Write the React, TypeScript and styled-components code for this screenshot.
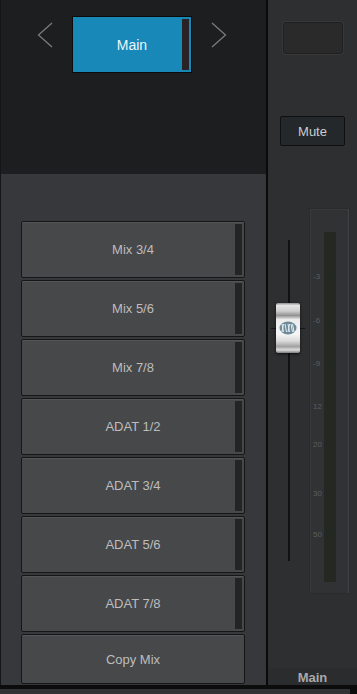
import React from "react";
import styled, { createGlobalStyle } from "styled-components";

const GlobalStyle = createGlobalStyle`
  html, body {
    margin: 0;
    padding: 0;
    background: #0c0c0c;
  }
  * {
    box-sizing: border-box;
  }
`;

const Screen = styled.div`
  width: 357px;
  height: 694px;
  display: flex;
  flex-direction: column;
  background: #0c0c0c;
  font-family: "Liberation Sans", Arial, sans-serif;
  overflow: hidden;
`;

const Body = styled.div`
  display: flex;
  height: 685px;
`;

const LeftColumn = styled.div`
  width: 268px;
  display: flex;
  flex-direction: column;
  border-left: 1px solid #141516;
  border-right: 2px solid #0a0a0a;
`;

const TopArea = styled.div`
  height: 174px;
  background: #1d1e20;
  display: flex;
  align-items: flex-start;
  gap: 19px;
  padding: 16px 0 0 36px;
`;

const Chevron = styled.svg`
  width: 16px;
  height: 26px;
  margin-top: 6px;
  flex-shrink: 0;
`;

const MainButton = styled.div`
  position: relative;
  flex-shrink: 0;
  width: 120px;
  height: 57px;
  border: 1px solid #0b0b0b;
  background: #1888b9;
  color: #eef6fa;
  font-size: 14px;
  display: flex;
  align-items: center;
  justify-content: center;
`;

const Indicator = styled.span<{ $tone: string }>`
  position: absolute;
  right: 2px;
  top: 2px;
  bottom: 2px;
  width: 7px;
  background: ${({ $tone }) => $tone};
`;

const LowerArea = styled.div`
  flex: 1;
  background: #37383b;
  padding: 47px 21px 0 20px;
  display: flex;
  flex-direction: column;
  gap: 2px;
  overflow: hidden;
`;

const MixButton = styled.div<{ $short?: boolean }>`
  position: relative;
  flex-shrink: 0;
  height: ${({ $short }) => ($short ? 50 : 57)}px;
  border: 1px solid #161616;
  border-radius: 2px;
  background: #47484a;
  box-shadow: inset 0 1px 0 #545557;
  color: #bdbdbd;
  font-size: 13px;
  display: flex;
  align-items: center;
  justify-content: center;
`;

const RightPanel = styled.div`
  flex: 1;
  background: #2e2f31;
  display: flex;
  flex-direction: column;
  align-items: center;
`;

const DisplayBox = styled.div`
  margin-top: 22px;
  width: 60px;
  height: 32px;
  border-radius: 3px;
  background: #2a2a2b;
  border: 1px solid #202021;
  box-shadow: 0 0 1px 1px #38393b;
`;

const MuteButton = styled.div`
  margin-top: 62px;
  width: 65px;
  height: 30px;
  border: 1px solid #0f0f0f;
  border-radius: 2px;
  background: #24282a;
  color: #cdcdcd;
  font-size: 13px;
  display: flex;
  align-items: center;
  justify-content: center;
`;

const StripArea = styled.div`
  margin-top: 62px;
  width: 100%;
  height: 386px;
  display: flex;
`;

const FaderColumn = styled.div`
  position: relative;
  width: 41px;
  display: flex;
  justify-content: center;
  padding-top: 32px;
`;

const FaderTrack = styled.div`
  width: 2px;
  height: 321px;
  background: #121213;
`;

const FaderTick = styled.div`
  position: absolute;
  top: 120px;
  left: 3px;
  width: 34px;
  height: 1px;
  background: #161616;
`;

const FaderCap = styled.div`
  position: absolute;
  top: 95px;
  left: 8px;
  width: 24px;
  height: 50px;
  border-radius: 2px;
  background: linear-gradient(
    to bottom,
    #8e8e8e 0%,
    #e4e4e4 5%,
    #cfcfcf 16%,
    #929292 25%,
    #ececec 33%,
    #f6f6f6 62%,
    #dadada 76%,
    #a2a2a2 87%,
    #dcdcdc 94%,
    #7e7e7e 100%
  );
  box-shadow: 0 1px 3px rgba(0, 0, 0, 0.7);
  display: flex;
  align-items: center;
  justify-content: center;
`;

const MeterPanel = styled.div`
  position: relative;
  width: 41px;
  height: 386px;
  background: #313234;
  border: 1px solid #2a2b2d;
  box-shadow: inset -1px 0 0 #424346, inset 1px 1px 0 #38393b;
  padding: 23px 0 0 14px;
`;

const MeterBar = styled.div`
  width: 12px;
  height: 350px;
  background: #232823;
`;

const ScaleLabel = styled.span`
  position: absolute;
  left: 3px;
  font-size: 8px;
  line-height: 8px;
  color: #5c5d5f;
`;

const ChannelName = styled.div`
  margin-top: auto;
  width: 100%;
  height: 17px;
  background: #2b2c2e;
  color: #a9a9a9;
  font-size: 13px;
  font-weight: bold;
  line-height: 19px;
  text-align: center;
  overflow: hidden;
`;

const Footer = styled.div`
  height: 9px;
  padding: 4px 7px 0 0;
  background: #0c0c0c;
`;

const FooterStrip = styled.div`
  height: 5px;
  background: #323335;
`;

const mixes = [
  "Mix 3/4",
  "Mix 5/6",
  "Mix 7/8",
  "ADAT 1/2",
  "ADAT 3/4",
  "ADAT 5/6",
  "ADAT 7/8",
];

// y of each scale label, measured from the top of the meter panel
const scale: [string, number][] = [
  ["-3", 69],
  ["-6", 113],
  ["-9", 156],
  ["12", 199],
  ["20", 237],
  ["30", 286],
  ["50", 327],
];

const FaderLogo = () => (
  <svg width="18" height="14" viewBox="0 0 18 14">
    <ellipse cx="9" cy="7" rx="8.5" ry="6.5" fill="#6d8b98" />
    <path
      d="M3 3 L4.5 11 M6 3 L7.5 11 M9 3 L10.5 11 M12 3 L13.5 11 M4.5 3 L3 11 M10.5 3 L9 11 M13.5 3 L15 11"
      stroke="#e6eef1"
      strokeWidth="1"
      fill="none"
    />
  </svg>
);

export default function App() {
  return (
    <>
      <GlobalStyle />
      <Screen>
        <Body>
          <LeftColumn>
            <TopArea>
              <Chevron viewBox="0 0 16 26">
                <path d="M15 1 L1.5 13 L15 25" stroke="#7b7b7b" strokeWidth="1.3" fill="none" />
              </Chevron>
              <MainButton>
                Main
                <Indicator $tone="#2a2325" />
              </MainButton>
              <Chevron viewBox="0 0 16 26">
                <path d="M1 1 L14.5 13 L1 25" stroke="#7b7b7b" strokeWidth="1.3" fill="none" />
              </Chevron>
            </TopArea>
            <LowerArea>
              {mixes.map((m) => (
                <MixButton key={m}>
                  {m}
                  <Indicator $tone="#242424" />
                </MixButton>
              ))}
              <MixButton $short>Copy Mix</MixButton>
            </LowerArea>
          </LeftColumn>
          <RightPanel>
            <DisplayBox />
            <MuteButton>Mute</MuteButton>
            <StripArea>
              <FaderColumn>
                <FaderTrack />
                <FaderTick />
                <FaderCap>
                  <FaderLogo />
                </FaderCap>
              </FaderColumn>
              <MeterPanel>
                <MeterBar />
                {scale.map(([label, y]) => (
                  <ScaleLabel key={label} style={{ top: y - 5 }}>
                    {label}
                  </ScaleLabel>
                ))}
              </MeterPanel>
            </StripArea>
            <ChannelName>Main</ChannelName>
          </RightPanel>
        </Body>
        <Footer>
          <FooterStrip />
        </Footer>
      </Screen>
    </>
  );
}
